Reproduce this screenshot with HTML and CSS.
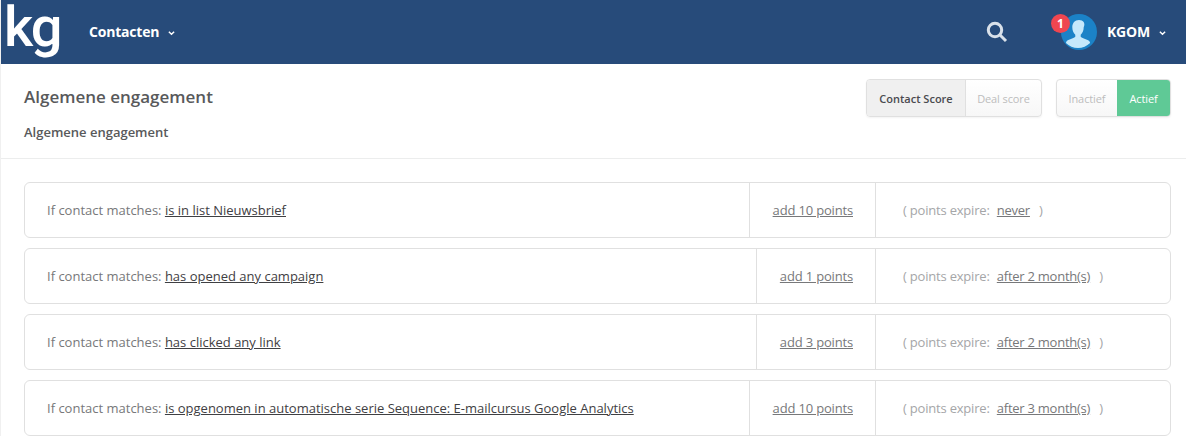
FILE: index.html
```html
<!DOCTYPE html>
<html lang="nl">
<head>
    <meta charset="UTF-8">
    <meta name="viewport" content="width=device-width, initial-scale=1.0">
    <title>Algemene engagement</title>
    <link rel="stylesheet" href="styles.css">
</head>
<body>
    <!-- Top navigation -->
    <header class="navbar">
        <div class="logo">kg</div>
        <a class="nav-link">Contacten
            <svg class="caret" viewBox="0 0 8 6"><path d="M1 1.5 L4 4.5 L7 1.5" /></svg>
        </a>
        <div class="nav-right">
            <svg class="search-icon" viewBox="0 0 22 22"><circle cx="9" cy="9" r="6.7" /><path d="M14 14 L20 20" /></svg>
            <div class="avatar">
                <svg viewBox="0 0 36 36">
                    <circle cx="18" cy="18" r="18" fill="#1b82c7" />
                    <path fill="#c5e8fb" d="M18 6c-4.300 0-6.700 3.200-6.700 7.200 0 3 1.100 5.800 3 7.500v2.100c-1.200 1.500-6 2.300-8.500 4.300-.5.500-.8 1.200-.9 1.900 3.200 3.100 7.500 5 12.100 5s8.900-1.900 12.100-5c-.1-.7-.4-1.400-.9-1.900-2.500-2-7.300-2.800-8.500-4.300v-2.100c1.900-1.700 3-4.500 3-7.500C24.700 9.200 22.300 6 18 6z" />
                </svg>
                <span class="badge">1</span>
            </div>
            <a class="nav-link user-link">KGOM
                <svg class="caret" viewBox="0 0 8 6"><path d="M1 1.500 L4 4.500 L7 1.500" /></svg>
            </a>
        </div>
    </header>

    <!-- Page heading -->
    <section class="page-head">
        <div>
            <h1>Algemene engagement</h1>
            <p>Algemene engagement</p>
        </div>
        <div class="toggles">
            <div class="btn-group">
                <span class="btn btn-pressed btn-score">Contact Score</span>
                <span class="btn btn-deal">Deal score</span>
            </div>
            <div class="btn-group">
                <span class="btn btn-inactive">Inactief</span>
                <span class="btn btn-active">Actief</span>
            </div>
        </div>
    </section>

    <!-- Scoring rules -->
    <main class="rules">
        <div class="rule">
            <div class="rule-match">If contact matches: <a>is in list Nieuwsbrief</a></div>
            <div class="rule-points"><a>add 10 points</a></div>
            <div class="rule-expire">( points expire: <a>never</a> )</div>
        </div>
        <div class="rule">
            <div class="rule-match">If contact matches: <a>has opened any campaign</a></div>
            <div class="rule-points"><a>add 1 points</a></div>
            <div class="rule-expire">( points expire: <a>after 2 month(s)</a> )</div>
        </div>
        <div class="rule">
            <div class="rule-match">If contact matches: <a>has clicked any link</a></div>
            <div class="rule-points"><a>add 3 points</a></div>
            <div class="rule-expire">( points expire: <a>after 2 month(s)</a> )</div>
        </div>
        <div class="rule">
            <div class="rule-match">If contact matches: <a>is opgenomen in automatische serie Sequence: E-mailcursus Google Analytics</a></div>
            <div class="rule-points"><a>add 10 points</a></div>
            <div class="rule-expire">( points expire: <a>after 3 month(s)</a> )</div>
        </div>
    </main>
</body>
</html>
```

FILE: styles.css
```css
body {
    font-family: 'Open Sans', sans-serif;
    font-size: 13px;
    margin: 0;
    background: white;
    color: #58595b;
    border-left: 1px solid #f0f0f0;
    overflow: hidden;
}
a {
    color: #3f4043;
    text-decoration: underline;
}
.navbar {
    display: flex;
    align-items: center;
    height: 64px;
    background: #274b7a;
    color: white;
}
.logo {
    width: 88px;
    height: 64px;
    padding-left: 3px;
    box-sizing: border-box;
    font-family: Roboto, sans-serif;
    font-size: 56px;
    font-weight: 500;
    line-height: 54px;
    letter-spacing: -2px;
    color: white;
}
.nav-link {
    display: flex;
    align-items: center;
    color: white;
    font-weight: 700;
    font-size: 14px;
    letter-spacing: -0.2px;
    text-decoration: none;
    margin-top: -1px;
}
.caret {
    width: 7px;
    height: 6px;
    margin-left: 9px;
    margin-top: 2px;
    fill: none;
    stroke: white;
    stroke-width: 1.6;
}
.nav-right {
    display: flex;
    align-items: center;
    margin-left: auto;
    padding-right: 20px;
}
.search-icon {
    width: 22px;
    height: 22px;
    fill: none;
    stroke: #d9e1ea;
    stroke-width: 3;
    margin-right: 53px;
}
.avatar {
    position: relative;
    width: 36px;
    height: 36px;
    margin-right: 10px;
}
.avatar svg {
    display: block;
}
.badge {
    position: absolute;
    top: 0;
    left: -10px;
    width: 19px;
    height: 19px;
    border-radius: 50%;
    background: #ef4650;
    color: white;
    font-size: 12px;
    font-weight: 700;
    line-height: 19px;
    text-align: center;
}
.page-head {
    display: flex;
    justify-content: space-between;
    height: 95px;
    box-sizing: border-box;
    padding: 15px 15px 0 23px;
    border-bottom: 1px solid #eceded;
}
.page-head h1 {
    margin: 6px 0 0;
    font-size: 17px;
    line-height: 24px;
    font-weight: 600;
}
.page-head p {
    margin: 14px 0 0;
    font-size: 13px;
    line-height: 18px;
    font-weight: 600;
}
.toggles {
    display: flex;
    gap: 14px;
    align-items: flex-start;
}
.btn-group {
    display: flex;
    height: 38px;
    box-sizing: border-box;
    border: 1px solid #e0e0e0;
    border-radius: 4px;
    overflow: hidden;
    background: linear-gradient(#ffffff, #f7f7f7);
    box-shadow: 0 1px 2px rgba(0,0,0,0.05);
}
.btn {
    display: flex;
    align-items: center;
    justify-content: center;
    font-size: 11px;
    letter-spacing: -0.1px;
    color: #bdbdbd;
}
.btn-score { width: 98px; }
.btn-deal { width: 75px; }
.btn-inactive { width: 60px; }
.btn-active { width: 53px; }
.btn-pressed {
    background: #f0f0f0;
    color: #4a4a4f;
    font-weight: 600;
    letter-spacing: 0;
    border-right: 1px solid #e0e0e0;
}
.btn-active {
    background: #5fc996;
    color: white;
}
.rules {
    display: flex;
    flex-direction: column;
    gap: 10px;
    padding: 23px 15px 0 23px;
}
.rule {
    display: flex;
    height: 56px;
    box-sizing: border-box;
    border: 1px solid #e0e0e0;
    border-radius: 6px;
    line-height: 54px;
}
.rule-match {
    flex: 1;
    padding-left: 22px;
    color: #77787a;
}
.rule-points {
    padding: 0 22px 0 22.5px;
    border-left: 1px solid #e0e0e0;
    letter-spacing: -0.17px;
}
.rule-points a {
    color: #77787a;
}
.rule-expire {
    width: 295px;
    box-sizing: border-box;
    padding-left: 27px;
    border-left: 1px solid #e0e0e0;
    color: #a5a6a8;
    letter-spacing: -0.2px;
}
.rule-expire a {
    margin: 0 6px 0 4px;
    color: #77787a;
    letter-spacing: -0.25px;
}
```
